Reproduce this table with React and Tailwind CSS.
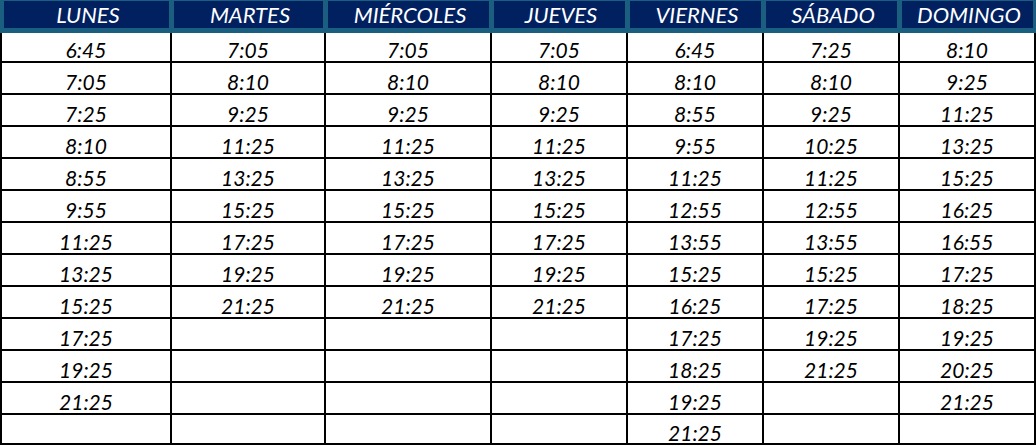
import React from "react";

const days = [
  { name: "LUNES", times: ["6:45", "7:05", "7:25", "8:10", "8:55", "9:55", "11:25", "13:25", "15:25", "17:25", "19:25", "21:25"] },
  { name: "MARTES", times: ["7:05", "8:10", "9:25", "11:25", "13:25", "15:25", "17:25", "19:25", "21:25"] },
  { name: "MIÉRCOLES", times: ["7:05", "8:10", "9:25", "11:25", "13:25", "15:25", "17:25", "19:25", "21:25"] },
  { name: "JUEVES", times: ["7:05", "8:10", "9:25", "11:25", "13:25", "15:25", "17:25", "19:25", "21:25"] },
  { name: "VIERNES", times: ["6:45", "8:10", "8:55", "9:55", "11:25", "12:55", "13:55", "15:25", "16:25", "17:25", "18:25", "19:25", "21:25"] },
  { name: "SÁBADO", times: ["7:25", "8:10", "9:25", "10:25", "11:25", "12:55", "13:55", "15:25", "17:25", "19:25", "21:25"] },
  { name: "DOMINGO", times: ["8:10", "9:25", "11:25", "13:25", "15:25", "16:25", "16:55", "17:25", "18:25", "19:25", "20:25", "21:25"] },
];

const cols = "grid grid-cols-[168px_152px_164px_134px_134px_134px_134px] gap-x-[2px]";
const font = { fontFamily: 'Lato, "Open Sans", sans-serif' };

export default function App() {
  const rows = Array.from({ length: 13 }, (_, i) => i);
  return (
    <div className="w-[1036px] h-[446px] bg-white italic font-normal" style={font}>
      <div className={`${cols} bg-[#1b5f80] px-[2px] h-[33px]`}>
        {days.map((d) => (
          <div key={d.name} className="pl-[2px] pr-[1px] pt-[1px]">
            <div className="bg-[#002060] h-[27px] flex items-center justify-center text-white text-[22px] leading-[25px] pl-[3px]">
              {d.name}
            </div>
          </div>
        ))}
      </div>
      <div className="bg-black px-[2px] pb-[2px] flex flex-col gap-y-[2px]">
        {rows.map((r) => {
          const h = r === 0 || r === 12 ? "h-[28px]" : "h-[30px]";
          return (
            <div key={r} className={cols}>
              {days.map((d) => (
                <div
                  key={d.name}
                  className={`${h} bg-white flex items-end justify-center text-black text-[21px] leading-[20px] ${r === 12 ? "pb-0" : "pb-[1px]"}`}
                >
                  {d.times[r] || ""}
                </div>
              ))}
            </div>
          );
        })}
      </div>
    </div>
  );
}
